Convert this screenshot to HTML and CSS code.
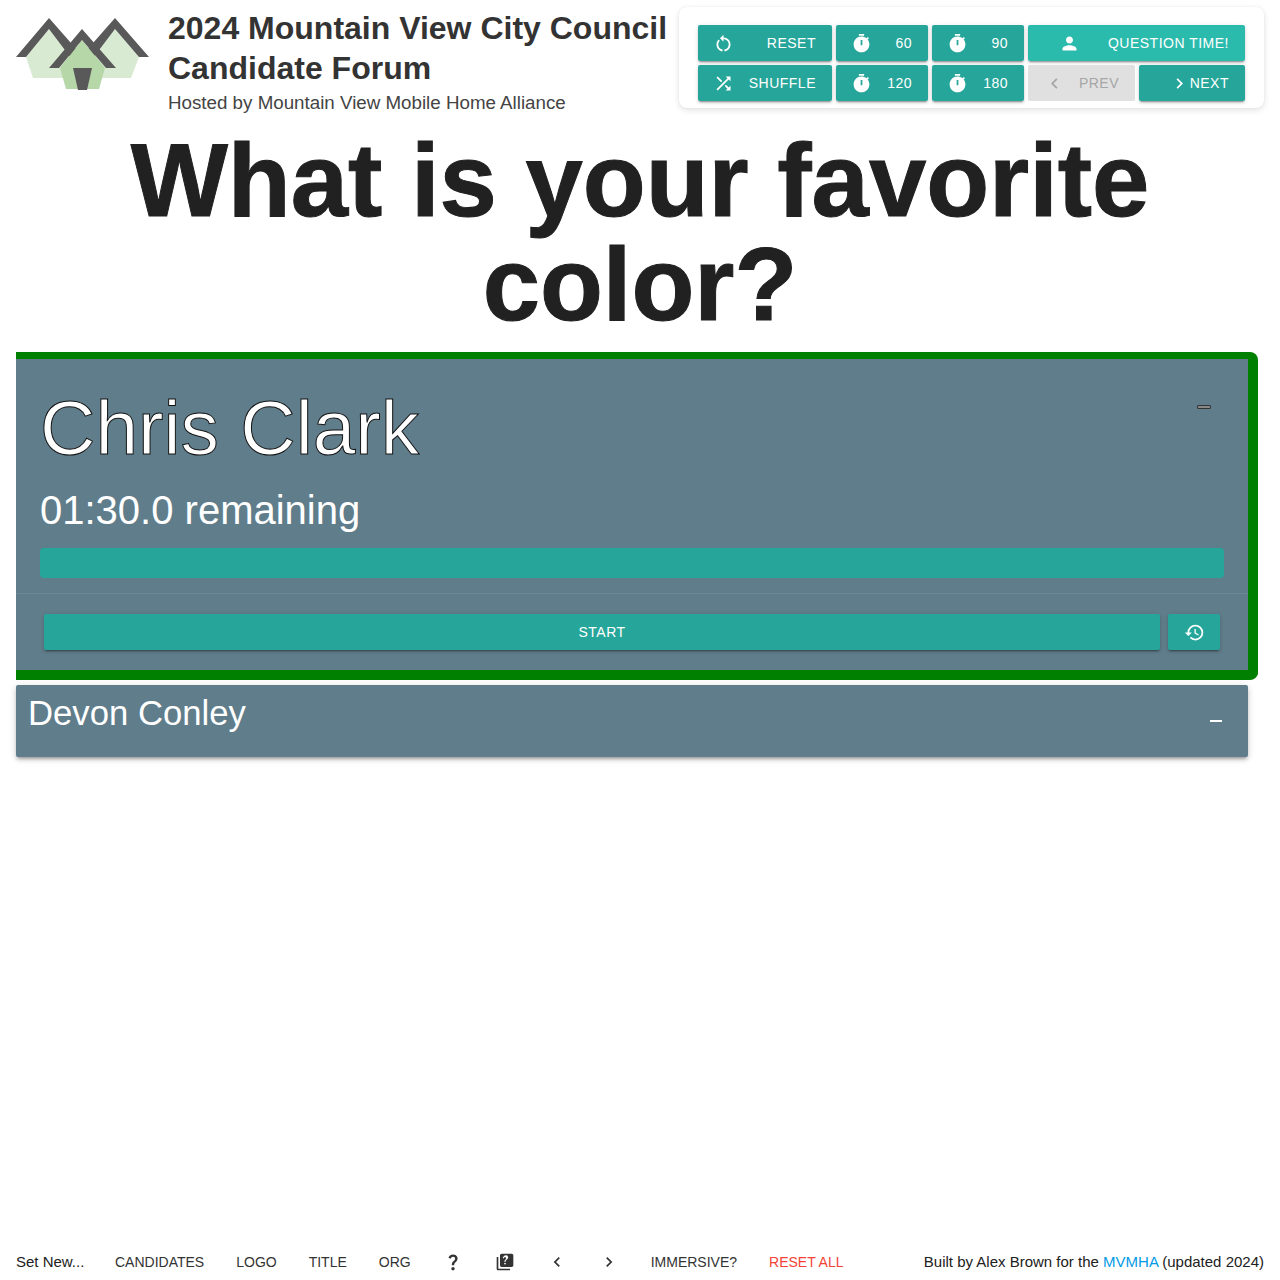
FILE: index.html
```html
<!DOCTYPE html>
<html lang="en">
<head>
<meta charset="utf-8">
<title>Candidate Forum</title>
<link rel="stylesheet" href="styles.css">
</head>
<body>
<header class="top">
  <svg class="logo" viewBox="0 0 133 72" width="133" height="72" aria-hidden="true">
    <path class="l1" d="M10 39 33 11 56 38 60 60H17Z"/>
    <path class="l1" d="M123 39 99 11 76 38 72 60H115Z"/>
    <path class="l3" d="M0 39 33 0 62 33 55 40 33 11 10 39Z"/>
    <path class="l3" d="M133 39 99 0 70 33 77 40 99 11 123 39Z"/>
    <path class="l2" d="M44 50 66 22 89 50 83 71H50Z"/>
    <path class="l3" d="M33 50 66 11 100 50H90L66 22 43 50Z"/>
    <path class="l3" d="M57 50H76L71 72H62Z"/>
  </svg>
  <div class="heading">
    <h1>2024 Mountain View City Council Candidate Forum</h1>
    <p>Hosted by Mountain View Mobile Home Alliance</p>
  </div>
  <div class="controls">
    <button class="btn reset"><svg viewBox="0 0 24 24"><path d="M12 5V2L8 6l4 4V7c3.31 0 6 2.69 6 6 0 2.97-2.17 5.43-5 5.91v2.02c3.95-.49 7-3.85 7-7.93 0-4.42-3.58-8-8-8zm-6 8c0-1.65.67-3.15 1.76-4.24L6.34 7.34A8.014 8.014 0 0 0 4 13c0 4.08 3.05 7.44 7 7.93v-2.02c-2.83-.48-5-2.94-5-5.91z"/></svg><span>Reset</span></button>
    <button class="btn num"><svg viewBox="0 0 24 24"><use href="#timer"/></svg><span>60</span></button>
    <button class="btn num"><svg viewBox="0 0 24 24"><use href="#timer"/></svg><span>90</span></button>
    <button class="btn qt"><svg viewBox="0 0 24 24"><path d="M12 12c2.21 0 4-1.79 4-4s-1.79-4-4-4-4 1.79-4 4 1.79 4 4 4zm0 2c-2.67 0-8 1.34-8 4v2h16v-2c0-2.66-5.33-4-8-4z"/></svg><span>Question Time!</span></button>
    <button class="btn reset"><svg viewBox="0 0 24 24"><path d="M10.59 9.17 5.41 4 4 5.41l5.17 5.17 1.42-1.41zM14.5 4l2.04 2.04L4 18.59 5.41 20 17.96 7.46 20 9.5V4h-5.5zm.33 9.41-1.41 1.41 3.13 3.13L14.5 20H20v-5.5l-2.04 2.04-3.13-3.13z"/></svg><span>Shuffle</span></button>
    <button class="btn num"><svg viewBox="0 0 24 24"><use href="#timer"/></svg><span>120</span></button>
    <button class="btn num"><svg viewBox="0 0 24 24"><use href="#timer"/></svg><span>180</span></button>
    <div class="pair">
      <button class="btn prev"><svg viewBox="0 0 24 24"><path d="M15.41 7.41 14 6l-6 6 6 6 1.41-1.41L10.83 12z"/></svg><span>Prev</span></button>
      <button class="btn next"><svg viewBox="0 0 24 24"><path d="M10 6 8.59 7.41 13.17 12l-4.58 4.59L10 18l6-6z"/></svg><span>Next</span></button>
    </div>
  </div>
</header>
<svg class="defs" width="0" height="0" aria-hidden="true"><defs><path id="timer" fill-rule="evenodd" d="M9 1h6v2H9zM19.03 7.39l1.42-1.42c-.43-.51-.9-.99-1.41-1.41l-1.42 1.42C16.07 4.74 14.12 4 12 4c-4.97 0-9 4.03-9 9s4.02 9 9 9 9-4.03 9-9c0-2.12-.74-4.07-1.97-5.61zM13 14h-2V8h2v6z"/></defs></svg>

<h2 class="question">What is your favorite color?</h2>

<section class="card active">
  <div class="body">
    <div class="name-row">
      <h3 class="name">Chris Clark</h3>
      <button class="mini" aria-label="Collapse"></button>
    </div>
    <div class="remaining">01:30.0 remaining</div>
    <div class="bar"></div>
  </div>
  <div class="actions">
    <button class="btn start"><span>Start</span></button>
    <button class="btn history"><svg viewBox="0 0 24 24"><path d="M13 3a9 9 0 0 0-9 9H1l3.89 3.89.07.14L9 12H6c0-3.87 3.13-7 7-7s7 3.13 7 7-3.13 7-7 7c-1.93 0-3.68-.79-4.94-2.06l-1.42 1.42A8.954 8.954 0 0 0 13 21a9 9 0 0 0 0-18zm-1 5v5l4.28 2.54.72-1.21-3.5-2.08V8H12z"/></svg></button>
  </div>
</section>

<section class="card closed">
  <h3 class="closed-name">Devon Conley</h3>
  <span class="dash"></span>
</section>

<footer class="foot">
  <nav class="links">
    <span class="set">Set New...</span>
    <a class="flat">Candidates</a>
    <a class="flat">Logo</a>
    <a class="flat">Title</a>
    <a class="flat">Org</a>
    <svg class="ico" viewBox="0 0 24 24"><path d="M11.07 12.85c.77-1.39 2.25-2.21 3.11-3.44.91-1.29.4-3.7-2.18-3.7-1.69 0-2.52 1.28-2.87 2.34L6.54 6.96C7.25 4.83 9.18 3 11.99 3c2.35 0 3.96 1.07 4.78 2.41.7 1.15 1.11 3.3.03 4.9-1.2 1.77-2.35 2.31-2.97 3.45-.25.46-.35.76-.35 2.24h-2.89c-.01-.78-.13-2.05.48-3.15zM14 20c0 1.1-.9 2-2 2s-2-.9-2-2 .9-2 2-2 2 .9 2 2z"/></svg>
    <svg class="ico" viewBox="0 0 24 24"><path d="M4 6H2v14c0 1.1.9 2 2 2h14v-2H4V6zm16-4H8c-1.1 0-2 .9-2 2v12c0 1.1.9 2 2 2h12c1.1 0 2-.9 2-2V4c0-1.1-.9-2-2-2zm-7.99 13c-.59 0-1.05-.47-1.05-1.05 0-.59.47-1.04 1.05-1.04.59 0 1.04.45 1.04 1.04-.01.58-.45 1.05-1.04 1.05zm2.5-6.17c-.63.93-1.23 1.21-1.56 1.81-.13.24-.18.4-.18 1.18h-1.52c0-.41-.06-1.08.26-1.65.41-.73 1.18-1.16 1.63-1.8.48-.68.21-1.94-1.14-1.94-.88 0-1.32.67-1.5 1.23l-1.37-.57C10.51 4.96 11.52 4 12.99 4c1.23 0 2.08.56 2.51 1.26.37.61.58 1.73.01 2.57z"/></svg>
    <svg class="ico" viewBox="0 0 24 24"><path d="M15.41 7.41 14 6l-6 6 6 6 1.41-1.41L10.83 12z"/></svg>
    <svg class="ico" viewBox="0 0 24 24"><path d="M10 6 8.59 7.41 13.17 12l-4.58 4.59L10 18l6-6z"/></svg>
    <a class="flat">Immersive?</a>
    <a class="flat danger">Reset All</a>
  </nav>
  <p class="credit">Built by Alex Brown for the <a href="#">MVMHA</a> (updated 2024)</p>
</footer>
</body>
</html>
```
FILE: styles.css
```css
* { box-sizing: border-box; }
html, body { margin: 0; height: 100%; }
body {
  height: 1280px;
  padding: 0 16px;
  position: relative;
  overflow: hidden;
  background: #fff;
  color: rgba(0,0,0,.87);
  font-family: "Liberation Sans", Arial, sans-serif;
}
.defs { position: absolute; }
.top { display: flex; align-items: flex-start; height: 116px; }
.logo { flex: none; margin: 18px 19px 0 0; }
.l1 { fill: #d9ead3; }
.l2 { fill: #b6d7a8; }
.l3 { fill: #595959; }
.heading { width: 511px; flex: none; padding-top: 8px; color: #333; }
.heading h1 { margin: 0; font-size: 32px; line-height: 40px; font-weight: 700; }
.heading p { margin: 3px 0 0; font-size: 18.75px; line-height: 24px; color: #444; }
.controls {
  position: absolute;
  left: 679px;
  top: 7px;
  width: 585px;
  height: 101px;
  padding: 18px 19px 0;
  background: #fff;
  border-radius: 8px;
  box-shadow: 0 2px 6px rgba(0,0,0,.12), 0 0 2px rgba(0,0,0,.06);
  display: grid;
  grid-template-columns: 134px 92px 92px 217px;
  grid-auto-rows: 36px;
  gap: 4px;
}
.btn {
  display: flex;
  align-items: center;
  justify-content: space-between;
  height: 36px;
  padding: 0 16px;
  border: 0;
  border-radius: 2px;
  background: #26a69a;
  color: #fff;
  font-family: "Liberation Sans", Arial, sans-serif;
  font-size: 14px;
  font-weight: 400;
  letter-spacing: .5px;
  text-transform: uppercase;
  box-shadow: 0 3px 1px -2px rgba(0,0,0,.2), 0 2px 2px 0 rgba(0,0,0,.14), 0 1px 5px 0 rgba(0,0,0,.12);
}
.btn svg { width: 21px; height: 21px; fill: currentColor; flex: none; }
.reset svg, .num svg { margin-left: -1px; }
.qt { background: #2bbbad; padding-left: 31px; }
.pair { display: flex; gap: 4px; }
.prev { width: 107px; background: #e0e0e0; color: #a6a6a6; box-shadow: none; }
.next { width: 106px; justify-content: flex-end; gap: 0; }
.question {
  margin: 0;
  height: 236px;
  padding: 13px 40px 0;
  text-align: center;
  font-size: 103px;
  line-height: 104px;
  font-weight: 700;
  color: #212121;
  -webkit-text-stroke: 1px #212121;
}
.card { width: 1232px; background: #607d8b; color: #fff; }
.active {
  width: 1242px;
  height: 328px;
  border-style: solid;
  border-color: #008000;
  border-width: 7px 10px 10px 0;
  border-radius: 0 8px 8px 0;
}
.body { height: 235px; padding: 24px; border-bottom: 1px solid rgba(255,255,255,.08); }
.name-row { display: flex; justify-content: space-between; align-items: flex-start; height: 90px; }
.name {
  margin: 0;
  font-size: 76.7px;
  line-height: 90px;
  font-weight: 400;
  color: #fff;
  -webkit-text-stroke: 1px #111;
}
.mini {
  width: 14px;
  height: 4px;
  margin: 22px 13px 0 0;
  padding: 0;
  border: 1px solid #333;
  border-radius: 1px;
  background: #888;
}
.remaining { margin-top: 13px; font-size: 40px; line-height: 48px; }
.bar { height: 30px; margin-top: 14px; border-radius: 4px; background: #26a69a; }
.actions { display: flex; gap: 8px; padding: 20px 28px 0; }
.start { flex: 1; justify-content: center; }
.history { width: 52px; padding: 0; justify-content: center; }
.closed {
  position: relative;
  height: 72px;
  margin-top: 5px;
  padding: 8px 12px;
  border-radius: 2px;
  box-shadow: 0 3px 3px -2px rgba(0,0,0,.3), 0 3px 4px rgba(0,0,0,.14), 0 1px 8px rgba(0,0,0,.12);
}
.closed-name { margin: 0; font-size: 34.7px; line-height: 40px; font-weight: 400; }
.dash { position: absolute; right: 26px; top: 35px; width: 12px; height: 2px; background: #fff; }
.foot {
  position: absolute;
  left: 16px;
  right: 16px;
  bottom: 0;
  height: 36px;
  display: flex;
  align-items: center;
  justify-content: space-between;
  font-size: 15px;
  color: #212121;
}
.links { display: flex; align-items: center; }
.set { width: 99px; margin-bottom: 2px; }
.flat {
  margin-right: 32px;
  font-size: 14px;
  text-transform: uppercase;
  color: #333;
}
.danger { color: #f44336; margin-right: 0; }
.ico { width: 20px; height: 20px; margin-right: 32px; fill: #333; flex: none; }
.credit { margin: 0 0 2px; }
.credit a { color: #039be5; text-decoration: none; }
```
